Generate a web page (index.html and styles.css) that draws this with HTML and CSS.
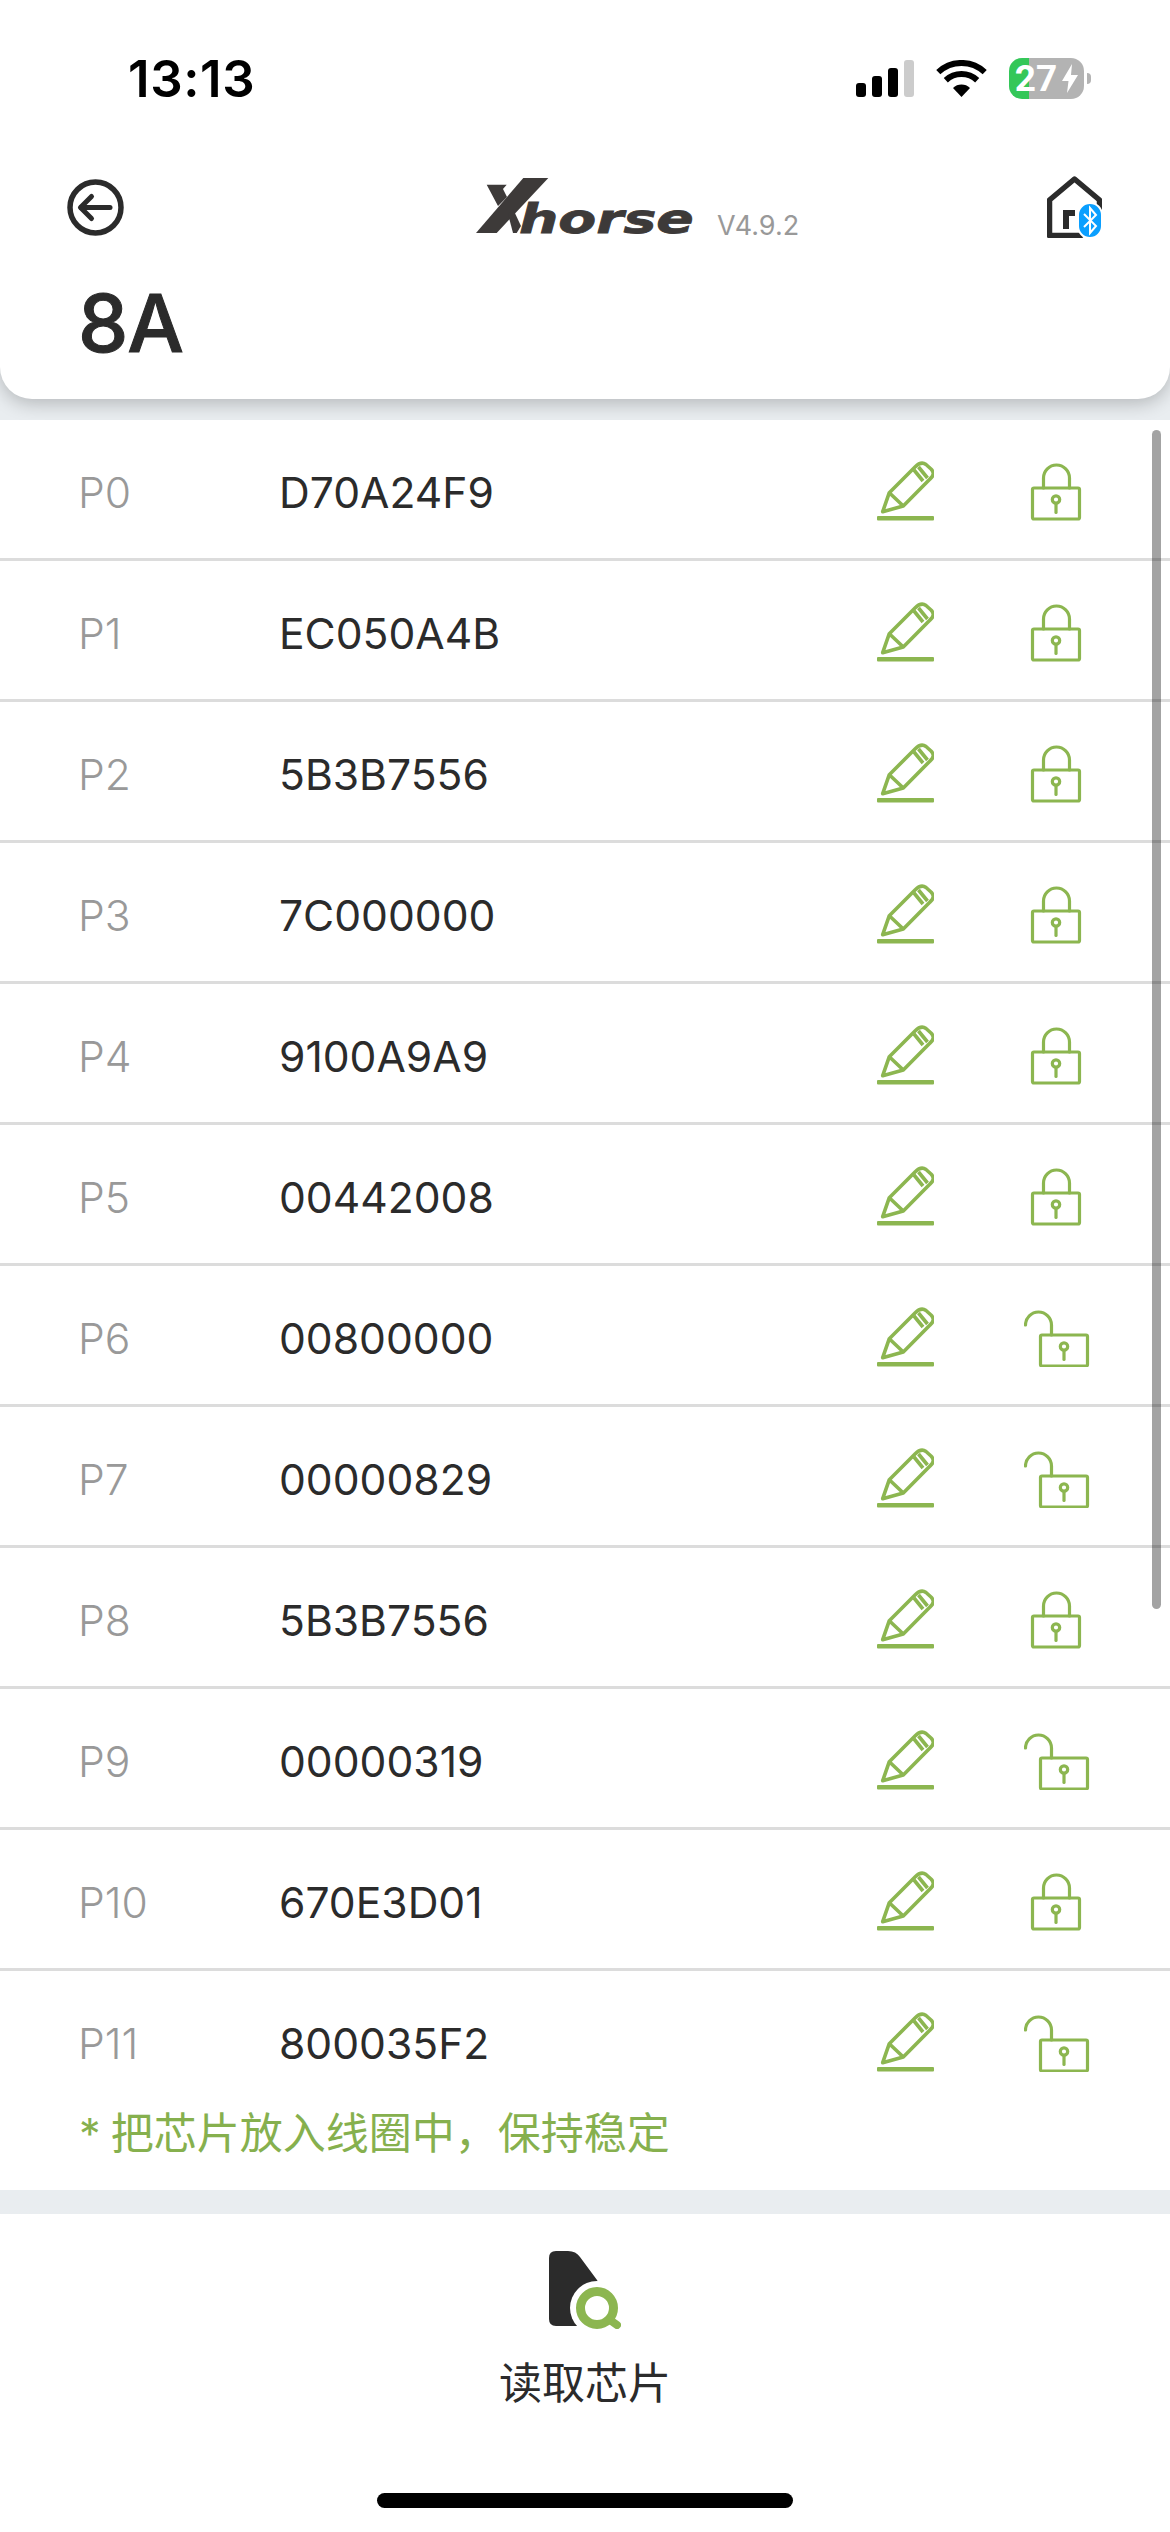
FILE: index.html
```html
<!DOCTYPE html>
<html lang="zh-CN">
  <head>
    <meta charset="UTF-8" />
    <meta name="viewport" content="width=device-width, initial-scale=1.0" />
    <title>8A</title>
    <link rel="stylesheet" href="styles.css">
  </head>
  <body>
    <!-- shared row icons -->
    <svg class="icon-defs" xmlns="http://www.w3.org/2000/svg">
      <symbol id="pencil" viewBox="0 0 57 60">
        <g fill="none" stroke="currentColor" stroke-width="3.6" stroke-linejoin="round">
          <path d="M5.7 50.7L12.3 31.7L38 6Q44 0 49 3.5L54 8Q59 13 53 18L26.3 45Z" />
          <path d="M12.3 31.7L26.3 45M37 9L46 20M41.5 6L50.5 17" />
        </g>
        <rect y="55" width="57" height="4.5" rx="1" fill="currentColor" />
      </symbol>
      <symbol id="locked" viewBox="0 0 70 60">
        <g fill="none" stroke="currentColor" stroke-width="3.2" stroke-linecap="round" stroke-linejoin="round">
          <rect x="8.5" y="27" width="47" height="31" rx="1.5" />
          <path d="M19.5 27V17a13 13 0 0 1 26 0V27" />
          <circle cx="32" cy="38.5" r="3.7" />
          <path d="M32 42.5V51.5" />
        </g>
      </symbol>
      <symbol id="unlocked" viewBox="0 0 70 60">
        <g fill="none" stroke="currentColor" stroke-width="3.2" stroke-linecap="round" stroke-linejoin="round">
          <rect x="16.5" y="28" width="47" height="31" rx="1.5" />
          <path d="M1.5 18a13 13 0 0 1 26 0V28" />
          <circle cx="40" cy="39.5" r="3.7" />
          <path d="M40 43.5V52.5" />
        </g>
      </symbol>
    </svg>

    <div class="page">
      <header class="top-card">
        <div class="status-bar">
          <span class="clock">13:13</span>
          <div class="status-icons">
            <svg class="signal" viewBox="0 0 58 37">
              <rect y="23" width="10" height="14" rx="3" fill="#000" />
              <rect x="16" y="16" width="10" height="21" rx="3" fill="#000" />
              <rect x="32" y="8" width="10" height="29" rx="3" fill="#000" />
              <rect x="48" width="10" height="37" rx="3" fill="#ccc" />
            </svg>
            <svg class="wifi" viewBox="0 0 51 37">
              <g fill="none" stroke="#000" stroke-width="6">
                <path d="M2.3 12.1A34 34 0 0 1 48.7 12.1" />
                <path d="M9.8 20.2A23 23 0 0 1 41.2 20.2" />
              </g>
              <path d="M25.5 37L17 27.9A12.5 12.5 0 0 1 34 27.9Z" fill="#000" />
            </svg>
            <div class="battery-wrap">
              <div class="battery">
                <span>27</span>
                <svg class="bolt" viewBox="0 0 16 29">
                  <path d="M10 0L0 17H6.5L5 29L16 11H9Z" fill="#fff" />
                </svg>
              </div>
              <div class="battery-nub"></div>
            </div>
          </div>
        </div>

        <div class="nav-row">
          <svg class="back-icon" viewBox="0 0 57 57">
            <g fill="none" stroke="#2b2b2b" stroke-width="5.5" stroke-linecap="round" stroke-linejoin="round">
              <circle cx="28.5" cy="28.5" r="25.5" />
              <path d="M14 28.5H43" stroke-width="5" />
              <path d="M24.5 17.5L13.5 28.5L24.5 39.5" stroke-width="5" />
            </g>
          </svg>
          <div class="brand">
            <svg class="logo" viewBox="0 0 220 68">
              <path d="M47.3 0H72.3L20.7 55H0Z" fill="#3d3a39" />
              <path d="M10.7 6.7H30.7L27 11L31 19L22 28Z" fill="#3d3a39" />
              <path d="M32 36L37 31L45 48L40.7 55H37Z" fill="#3d3a39" />
              <text class="logo-word" transform="translate(43 55) scale(1.38 1)">horse</text>
            </svg>
            <span class="version">V4.9.2</span>
          </div>
          <svg class="home-icon" viewBox="0 0 55 62">
            <path d="M2.5 59.5V24L27.5 3L52.5 24V34M2.5 59.5H34" fill="none" stroke="#2b2b2b" stroke-width="5.5" stroke-linecap="round" stroke-linejoin="round" />
            <path d="M16 34H28V40H22V53H16Z" fill="#2b2b2b" />
            <rect x="31" y="27" width="24" height="35" rx="12" fill="#0a9fff" stroke="#fff" stroke-width="2" />
            <path d="M37 38L49 50L43 57V32L49 39L37 51" fill="none" stroke="#fff" stroke-width="2" />
          </svg>
        </div>

        <h1 class="title">8A</h1>
      </header>

      <div class="page-list">
        <div class="row">
          <span class="page-no">P0</span>
          <span class="page-value">D70A24F9</span>
          <svg class="pencil"><use href="#pencil" /></svg>
          <svg class="lock"><use href="#locked" /></svg>
        </div>
        <div class="row">
          <span class="page-no">P1</span>
          <span class="page-value">EC050A4B</span>
          <svg class="pencil"><use href="#pencil" /></svg>
          <svg class="lock"><use href="#locked" /></svg>
        </div>
        <div class="row">
          <span class="page-no">P2</span>
          <span class="page-value">5B3B7556</span>
          <svg class="pencil"><use href="#pencil" /></svg>
          <svg class="lock"><use href="#locked" /></svg>
        </div>
        <div class="row">
          <span class="page-no">P3</span>
          <span class="page-value">7C000000</span>
          <svg class="pencil"><use href="#pencil" /></svg>
          <svg class="lock"><use href="#locked" /></svg>
        </div>
        <div class="row">
          <span class="page-no">P4</span>
          <span class="page-value">9100A9A9</span>
          <svg class="pencil"><use href="#pencil" /></svg>
          <svg class="lock"><use href="#locked" /></svg>
        </div>
        <div class="row">
          <span class="page-no">P5</span>
          <span class="page-value">00442008</span>
          <svg class="pencil"><use href="#pencil" /></svg>
          <svg class="lock"><use href="#locked" /></svg>
        </div>
        <div class="row">
          <span class="page-no">P6</span>
          <span class="page-value">00800000</span>
          <svg class="pencil"><use href="#pencil" /></svg>
          <svg class="lock"><use href="#unlocked" /></svg>
        </div>
        <div class="row">
          <span class="page-no">P7</span>
          <span class="page-value">00000829</span>
          <svg class="pencil"><use href="#pencil" /></svg>
          <svg class="lock"><use href="#unlocked" /></svg>
        </div>
        <div class="row">
          <span class="page-no">P8</span>
          <span class="page-value">5B3B7556</span>
          <svg class="pencil"><use href="#pencil" /></svg>
          <svg class="lock"><use href="#locked" /></svg>
        </div>
        <div class="row">
          <span class="page-no">P9</span>
          <span class="page-value">00000319</span>
          <svg class="pencil"><use href="#pencil" /></svg>
          <svg class="lock"><use href="#unlocked" /></svg>
        </div>
        <div class="row">
          <span class="page-no">P10</span>
          <span class="page-value">670E3D01</span>
          <svg class="pencil"><use href="#pencil" /></svg>
          <svg class="lock"><use href="#locked" /></svg>
        </div>
        <div class="row">
          <span class="page-no">P11</span>
          <span class="page-value">800035F2</span>
          <svg class="pencil"><use href="#pencil" /></svg>
          <svg class="lock"><use href="#unlocked" /></svg>
        </div>
        <div class="scroll-thumb"></div>
      </div>

      <p class="hint">* 把芯片放入线圈中，保持稳定</p>
      <div class="band"></div>

      <footer class="bottom-bar">
        <svg class="read-icon" viewBox="0 0 72 78">
          <path d="M0 7Q0 0 7 0H19Q27 0 31 6L48 29Q51 33 51 40V75H7Q0 75 0 68Z" fill="#2b2b2b" />
          <circle cx="48" cy="57" r="27" fill="#fff" />
          <circle cx="48" cy="57" r="16.5" fill="none" stroke="#8cb650" stroke-width="9" />
          <path d="M61 69L68 74" stroke="#8cb650" stroke-width="8" stroke-linecap="round" />
        </svg>
        <span class="read-label">读取芯片</span>
        <div class="home-bar"></div>
      </footer>
    </div>
  </body>
</html>
```
FILE: styles.css
```css
body {
  margin: 0;
  background-color: #e9edf0;
  font-family: Inter, "Noto Sans CJK SC", sans-serif;
  color: #2b2b2b;
}

.icon-defs {
  display: none;
}

.page {
  width: 1170px;
  height: 2532px;
  display: flex;
  flex-direction: column;
  overflow: hidden;
}

/* header card */
.top-card {
  height: 399px;
  flex: none;
  margin-bottom: 21px;
  background: white;
  border-radius: 0 0 32px 32px;
  box-shadow: 0 5px 18px rgba(0, 0, 0, 0.22);
}

.status-bar {
  height: 156px;
  display: flex;
  align-items: center;
  justify-content: space-between;
  padding: 0 79px 0 128px;
}

.clock {
  font-size: 51px;
  font-weight: 600;
  letter-spacing: 0.6px;
  color: #000;
}

.status-icons {
  display: flex;
  align-items: center;
  gap: 22px;
}

.signal {
  width: 58px;
  height: 37px;
}

.wifi {
  width: 51px;
  height: 37px;
}

.battery-wrap {
  display: flex;
  align-items: center;
  gap: 3px;
}

.battery {
  width: 75px;
  height: 41px;
  display: flex;
  align-items: center;
  justify-content: center;
  gap: 5px;
  border-radius: 13px;
  background: linear-gradient(to right, #34c759 20px, #b3b3b3 20px);
  color: white;
  font-family: Roboto, sans-serif;
  font-size: 37px;
  font-weight: 700;
}

.bolt {
  width: 16px;
  height: 29px;
}

.battery-nub {
  width: 4px;
  height: 11px;
  border-radius: 0 4px 4px 0;
  background: #b3b3b3;
}

.nav-row {
  height: 102px;
  display: grid;
  grid-template-columns: 409px 1fr auto;
  align-items: center;
  padding: 0 68px 0 67px;
}

.back-icon {
  width: 57px;
  height: 57px;
}

.brand {
  display: flex;
  align-items: flex-end;
  gap: 21px;
  height: 58px;
}

.logo {
  width: 220px;
  height: 68px;
  margin-bottom: -10px;
}

.logo-word {
  font-family: "DejaVu Sans", sans-serif;
  font-size: 40px;
  font-weight: 700;
  font-style: italic;
  fill: #3d3a39;
  stroke: #3d3a39;
  stroke-width: 0.8px;
}

.version {
  margin-bottom: -6px;
  font-size: 27px;
  color: #999;
}

.home-icon {
  width: 55px;
  height: 62px;
}

.title {
  height: 130px;
  margin: 0;
  padding-left: 78px;
  font-size: 80px;
  font-weight: 500;
  -webkit-text-stroke: 1px #2b2b2b;
  letter-spacing: -1px;
  line-height: 130px;
}

/* page rows */
.page-list {
  position: relative;
  flex: 1;
  overflow: hidden;
  background: white;
}

.row {
  box-sizing: border-box;
  height: 141px;
  display: grid;
  grid-template-columns: 201px 598px 57px 70px;
  align-items: center;
  padding: 3px 0 0 78px;
  border-bottom: 3px solid #dcdcdc;
  font-size: 42.6px;
}

.page-no,
.page-value {
  padding-top: 3px;
}

.page-no {
  color: #999;
  font-weight: 300;
}

.pencil {
  width: 57px;
  height: 60px;
  color: #8cb650;
}

.lock {
  width: 70px;
  height: 60px;
  margin-left: 90px;
  color: #8cb650;
}

.scroll-thumb {
  position: absolute;
  top: 10px;
  right: 9px;
  width: 9px;
  height: 1179px;
  border-radius: 5px;
  background: rgba(0, 0, 0, 0.36);
}

.hint {
  height: 84px;
  flex: none;
  margin: 0;
  padding-left: 79px;
  background: white;
  color: #86b04e;
  font-size: 43px;
  line-height: 54px;
  word-spacing: -2px;
}

.band {
  height: 24px;
  flex: none;
  background: #e9edf0;
}

/* bottom action */
.bottom-bar {
  height: 318px;
  flex: none;
  box-sizing: border-box;
  display: flex;
  flex-direction: column;
  align-items: center;
  padding: 37px 0 24px;
  background: white;
}

.read-icon {
  width: 72px;
  height: 78px;
}

.read-label {
  margin-top: 25px;
  font-size: 43px;
  line-height: 58px;
}

.home-bar {
  width: 416px;
  height: 15px;
  margin-top: auto;
  border-radius: 8px;
  background: #000;
}
```
